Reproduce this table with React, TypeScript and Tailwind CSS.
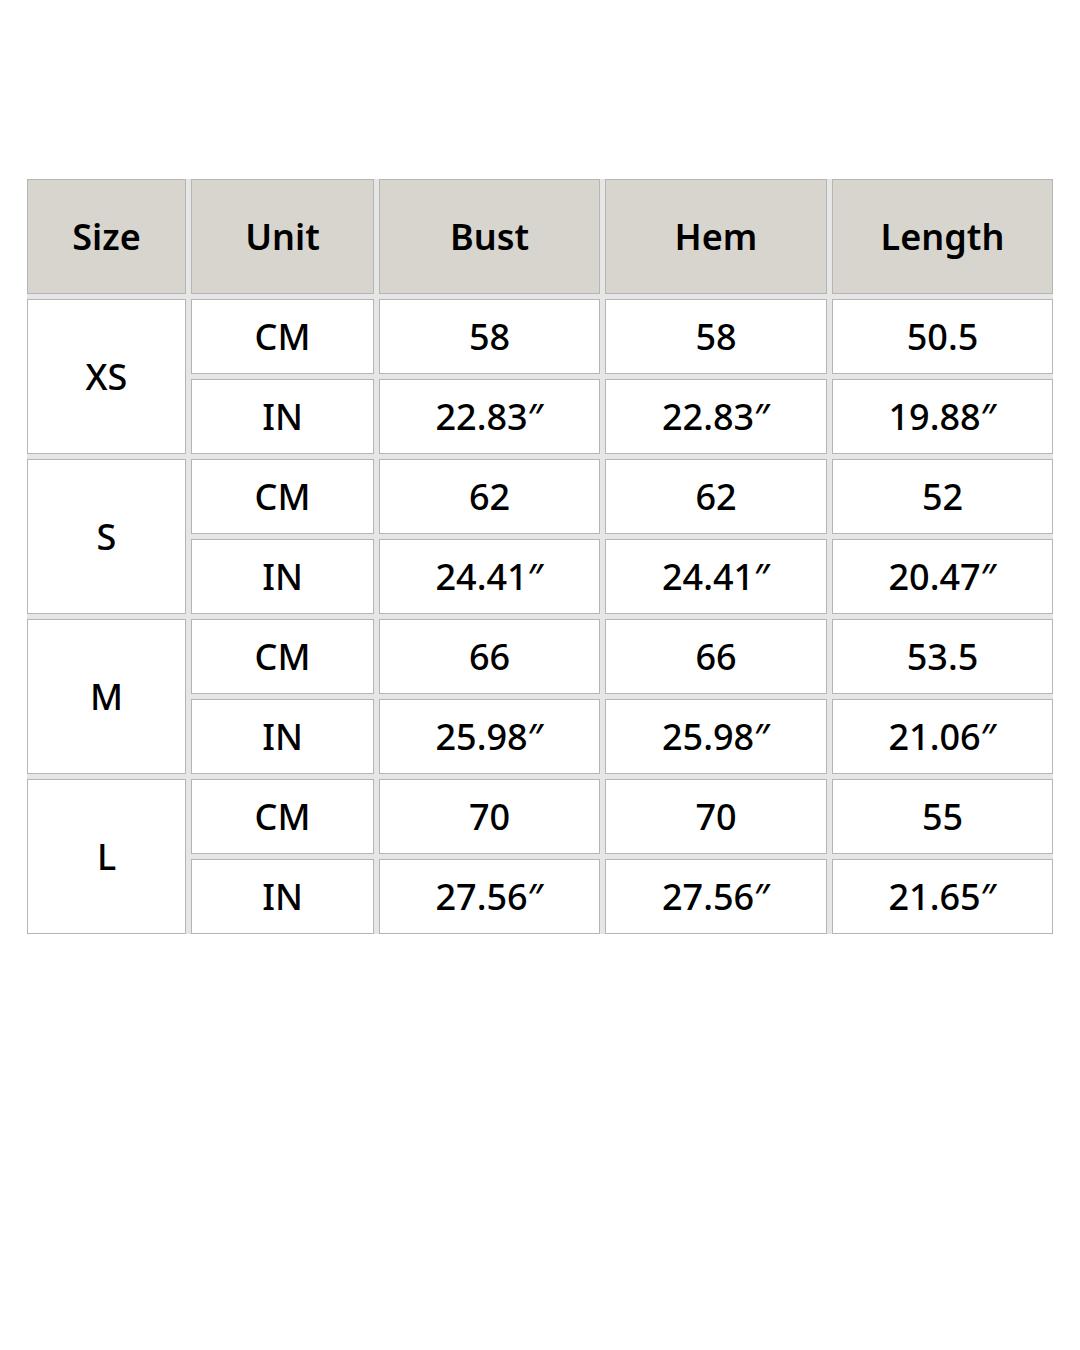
const headers = ["Size", "Unit", "Bust", "Hem", "Length"];

const sizes = [
  { size: "XS", cm: ["58", "58", "50.5"], inch: ["22.83″", "22.83″", "19.88″"] },
  { size: "S", cm: ["62", "62", "52"], inch: ["24.41″", "24.41″", "20.47″"] },
  { size: "M", cm: ["66", "66", "53.5"], inch: ["25.98″", "25.98″", "21.06″"] },
  { size: "L", cm: ["70", "70", "55"], inch: ["27.56″", "27.56″", "21.65″"] },
];

function Cell({ children, className }: { children: React.ReactNode; className?: string }) {
  return (
    <div
      className={`flex items-center justify-center border border-[#b5b5b5] text-black ${className ?? "bg-white text-[36px] font-medium"}`}
    >
      {children}
    </div>
  );
}

export default function App() {
  return (
    <div className="min-h-[1350px] w-[1080px] bg-white pt-[179px] pl-[27px] font-['Noto_Sans','Open_Sans',sans-serif]">
      <div className="grid w-[1026px] grid-cols-[159px_183px_221px_222px_221px] grid-rows-[115px_repeat(8,75px)] gap-[5px] bg-[#e6e6e6]">
        {headers.map((h) => (
          <Cell key={h} className="bg-[#d7d5ce] text-[36px] font-semibold">
            {h}
          </Cell>
        ))}
        {sizes.flatMap((s) => [
          <Cell key={s.size} className="row-span-2 bg-white text-[36px] font-medium">
            {s.size}
          </Cell>,
          <Cell key={s.size + "cm"}>CM</Cell>,
          ...s.cm.map((v, i) => <Cell key={s.size + "c" + i}>{v}</Cell>),
          <Cell key={s.size + "in"}>IN</Cell>,
          ...s.inch.map((v, i) => <Cell key={s.size + "i" + i}>{v}</Cell>),
        ])}
      </div>
    </div>
  );
}
